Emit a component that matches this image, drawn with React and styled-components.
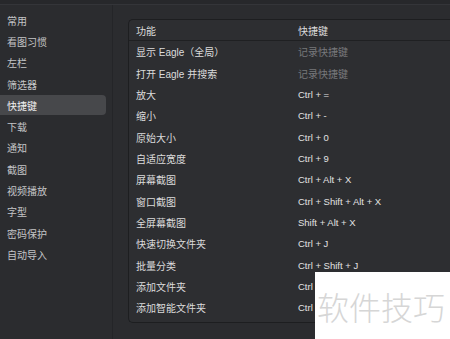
import React from 'react';
import styled, { createGlobalStyle } from 'styled-components';

const GlobalStyle = createGlobalStyle`
  html, body {
    margin: 0;
    padding: 0;
    background: #2b2c2f;
  }
  body {
    font-family: "Liberation Sans", "Noto Sans CJK SC", sans-serif;
  }
`;

const Screen = styled.div`
  position: relative;
  width: 450px;
  height: 339px;
  overflow: hidden;
  background: #2b2c2f;
  display: flex;
  flex-direction: column;
`;

const TopStrip = styled.div`
  height: 4px;
  flex: none;
  background: #27282b;
  border-bottom: 1px solid #343539;
`;

const Body = styled.div`
  flex: 1;
  display: flex;
  min-height: 0;
`;

const Sidebar = styled.nav`
  width: 112px;
  flex: none;
  border-right: 1px solid #242528;
  background: #2b2c2f;
  padding-top: 5px;
  display: flex;
  flex-direction: column;
  gap: 1px;
`;

const NavItem = styled.div`
  height: 20.3px;
  width: 106px;
  box-sizing: border-box;
  display: flex;
  align-items: center;
  padding-left: 7px;
  font-size: 10px;
  color: ${p => (p.$active ? '#f0f0f0' : '#c4c5c7')};
  background: ${p => (p.$active ? '#47484b' : 'transparent')};
  border-radius: 0 4px 4px 0;
`;

const Content = styled.main`
  flex: 1;
  padding: 14px 0 16px 15px;
  display: flex;
  min-width: 0;
`;

const Card = styled.section`
  flex: 1;
  background: #2d2e31;
  border: 1px solid #1d1e20;
  border-right: none;
  border-radius: 5px 0 0 5px;
  display: flex;
  flex-direction: column;
  overflow: hidden;
`;

const Row = styled.div`
  display: grid;
  grid-template-columns: 162px 1fr;
  align-items: center;
  height: ${p => (p.$head ? '20px' : '21.35px')};
  padding-left: 7px;
  font-size: 10px;
  color: #dcdcdc;
  border-bottom: ${p => (p.$head ? '1px solid #1f2022' : 'none')};
`;

const Keys = styled.span`
  color: ${p => (p.$muted ? '#77787b' : '#e2e2e2')};
  font-size: ${p => (p.$muted ? '10px' : '9.5px')};
`;

const Watermark = styled.div`
  position: absolute;
  left: 315px;
  top: 272px;
  right: 0;
  bottom: 0;
  background: #ffffff;
  display: flex;
  align-items: center;
  padding-left: 2px;
  font-family: "Noto Sans CJK SC", sans-serif;
  font-weight: 300;
  font-size: 32px;
  color: #d6d6d6;
  white-space: nowrap;
`;

const navItems = [
  '常用', '看图习惯', '左栏', '筛选器', '快捷键', '下载', '通知',
  '截图', '视频播放', '字型', '密码保护', '自动导入',
];

const shortcuts = [
  ['显示 Eagle（全局）', '记录快捷键', true],
  ['打开 Eagle 并搜索', '记录快捷键', true],
  ['放大', 'Ctrl + ='],
  ['缩小', 'Ctrl + -'],
  ['原始大小', 'Ctrl + 0'],
  ['自适应宽度', 'Ctrl + 9'],
  ['屏幕截图', 'Ctrl + Alt + X'],
  ['窗口截图', 'Ctrl + Shift + Alt + X'],
  ['全屏幕截图', 'Shift + Alt + X'],
  ['快速切换文件夹', 'Ctrl + J'],
  ['批量分类', 'Ctrl + Shift + J'],
  ['添加文件夹', 'Ctrl + N'],
  ['添加智能文件夹', 'Ctrl + Shift + N'],
];

export default function App() {
  return (
    <Screen>
      <GlobalStyle />
      <TopStrip />
      <Body>
        <Sidebar>
          {navItems.map(name => (
            <NavItem key={name} $active={name === '快捷键'}>{name}</NavItem>
          ))}
        </Sidebar>
        <Content>
          <Card>
            <Row $head>
              <span>功能</span>
              <span>快捷键</span>
            </Row>
            {shortcuts.map(([name, keys, muted]) => (
              <Row key={name}>
                <span>{name}</span>
                <Keys $muted={muted}>{keys}</Keys>
              </Row>
            ))}
          </Card>
        </Content>
      </Body>
      <Watermark>软件技巧</Watermark>
    </Screen>
  );
}
